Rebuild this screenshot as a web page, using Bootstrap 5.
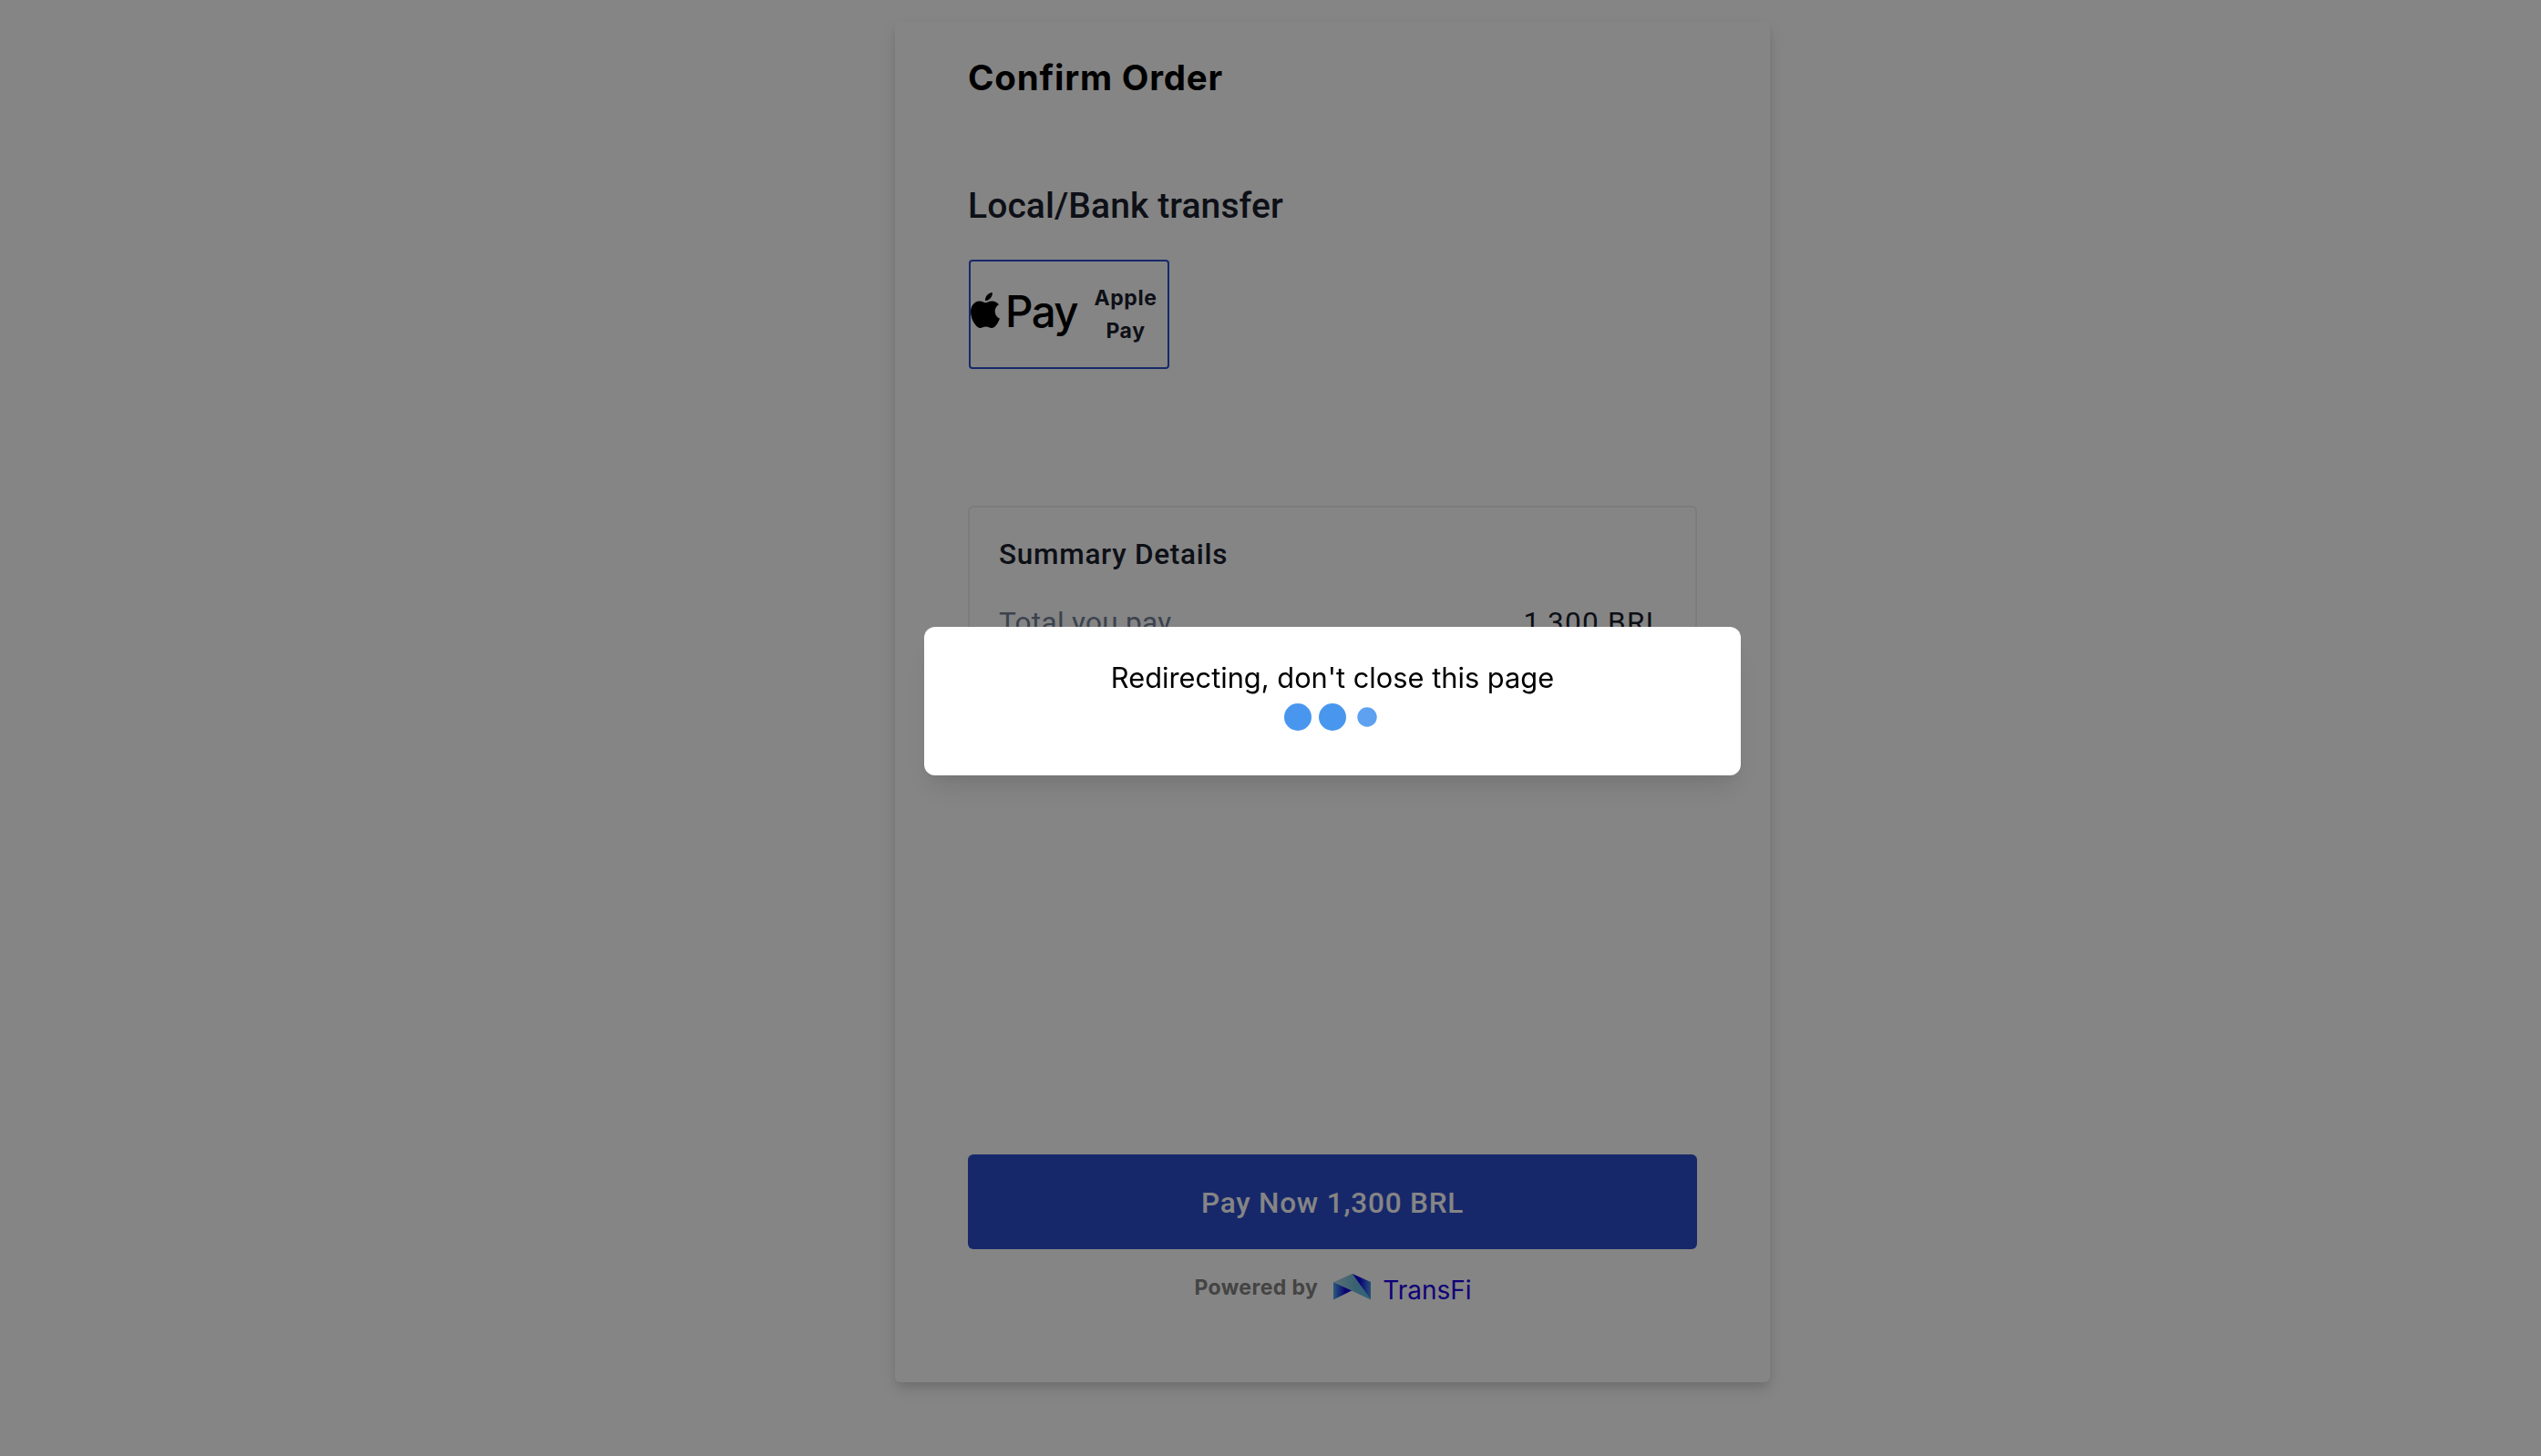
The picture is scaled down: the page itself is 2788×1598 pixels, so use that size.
<!DOCTYPE html>
<html lang="en">

<head>
    <meta charset="UTF-8" />
    <meta name="viewport" content="width=device-width, initial-scale=1" />
    <title>Confirm Order</title>
    <link href="https://cdn.jsdelivr.net/npm/bootstrap@5.3.2/dist/css/bootstrap.min.css" rel="stylesheet" />
    <style>
        :root {
            --brand: #2c4dcc;
            --text-dark: #1a202c;
            --text-muted: #718096;
            --font-display: Inter, "Liberation Sans", sans-serif;
            --font-text: Roboto, "Liberation Sans", sans-serif;
        }

        body {
            background-color: #fff;
            color: var(--text-dark);
            font-family: var(--font-text);
        }

        .page-shell {
            padding-top: 24px;
            padding-left: 136px;
        }

        .order-panel {
            width: 960px;
            height: 1493px;
            padding: 32px 80px 78px;
            background-color: #fff;
            border-radius: 6px;
            box-shadow: 0 8px 16px -1px rgba(0, 0, 0, .15), 0 4px 8px -1px rgba(0, 0, 0, .05);
        }

        .order-title {
            color: #000;
            font: 700 38.5px/58px var(--font-display);
            letter-spacing: .8px;
            margin-bottom: 82px;
        }

        .method-title {
            font-size: 39px;
            font-weight: 500;
            line-height: 60px;
            letter-spacing: .1px;
            margin-bottom: 29px;
        }

        .method-option {
            width: 220px;
            height: 120px;
            margin-left: 1px;
            border: 2px solid var(--brand);
            border-radius: 4px;
            margin-bottom: 150px;
        }

        .apple-mark {
            width: 32px;
            height: 39px;
            margin-bottom: 10px;
        }

        .pay-word {
            color: #000;
            font: 500 47.5px/60px var(--font-display);
            letter-spacing: -1.6px;
            margin-left: 6px;
            margin-bottom: 6px;
        }

        .method-name {
            width: 92px;
            font: 700 23px/36px var(--font-display);
            letter-spacing: .6px;
        }

        .summary-box {
            height: 230px;
            padding: 28px 32px;
            border: 2px solid #edeef0;
            border-radius: 6px;
        }

        .summary-title {
            font-size: 31.5px;
            font-weight: 500;
            line-height: 48px;
            letter-spacing: .73px;
            margin-bottom: 27px;
        }

        .summary-line {
            font-size: 31.5px;
            line-height: 48px;
            letter-spacing: .3px;
        }

        .summary-line .amount {
            letter-spacing: 1.3px;
            padding-right: 4px;
        }

        .btn-pay {
            height: 104px;
            background-color: var(--brand);
            color: #fff;
            border: 0;
            border-radius: 6px;
            font-size: 31.5px;
            font-weight: 500;
            letter-spacing: .8px;
            padding: 3px 0 0;
        }

        .powered-row {
            height: 44px;
            margin-top: 24px;
            padding-left: 1px;
        }

        .powered-label {
            color: #828282;
            font: 700 23px/36px var(--font-display);
            letter-spacing: .4px;
        }

        .transfi-mark {
            width: 41px;
            height: 29px;
            margin: 3px 13px 0 17px;
        }

        .transfi-name {
            color: #1d00e6;
            font: 400 28px/36px var(--font-display);
            margin-top: 3px;
        }

        .modal-backdrop.show {
            opacity: .48;
        }

        .redirect-modal {
            padding-left: 136px;
        }

        .redirect-modal .modal-dialog {
            max-width: 896px;
            margin-top: 688px;
        }

        .redirect-modal .modal-content {
            height: 163px;
            padding-top: 32px;
            border: 0;
            border-radius: 12px;
            box-shadow: 0 20px 30px -6px rgba(0, 0, 0, .1), 0 8px 12px -4px rgba(0, 0, 0, .05);
        }

        .redirect-text {
            color: #000;
            font: 400 30.8px/48px var(--font-display);
        }

        .loader-dots {
            width: 106px;
            height: 30px;
            margin-top: 4px;
        }
    </style>
</head>

<body>

    <div class="page-shell min-vh-100 d-flex justify-content-center align-items-start">
        <main class="order-panel d-flex flex-column">
            <h1 class="order-title">Confirm Order</h1>

            <!-- Payment method -->
            <h2 class="method-title">Local/Bank transfer</h2>
            <div class="method-option d-flex align-items-center">
                <svg class="apple-mark flex-shrink-0" viewBox="2.2 0 19.6 24" preserveAspectRatio="none" aria-hidden="true">
                    <path d="M12.152 6.896c-.948 0-2.415-1.078-3.96-1.04-2.04.027-3.91 1.183-4.961 3.014-2.117 3.675-.546 9.103 1.519 12.09 1.013 1.454 2.208 3.09 3.792 3.039 1.52-.065 2.09-.987 3.935-.987 1.831 0 2.35.987 3.96.948 1.637-.026 2.676-1.48 3.676-2.948 1.156-1.688 1.636-3.325 1.662-3.415-.039-.013-3.182-1.221-3.22-4.857-.026-3.04 2.48-4.494 2.597-4.559-1.429-2.09-3.623-2.324-4.39-2.376-2-.156-3.675 1.09-4.61 1.09zM15.53 3.83c.843-1.012 1.4-2.427 1.245-3.83-1.207.052-2.662.805-3.532 1.818-.78.896-1.454 2.338-1.273 3.714 1.338.104 2.715-.688 3.559-1.701" />
                </svg>
                <span class="pay-word">Pay</span>
                <span class="method-name text-center ms-auto">Apple Pay</span>
            </div>

            <!-- Summary -->
            <section class="summary-box">
                <h3 class="summary-title">Summary Details</h3>
                <div class="summary-line d-flex justify-content-between">
                    <span style="color: var(--text-muted)">Total you pay</span>
                    <span class="amount">1,300 BRL</span>
                </div>
            </section>

            <button type="button" class="btn btn-pay w-100 mt-auto">Pay Now 1,300 BRL</button>

            <div class="powered-row d-flex justify-content-center align-items-start">
                <span class="powered-label">Powered by</span>
                <svg class="transfi-mark" viewBox="0 0 41 29" aria-hidden="true">
                    <defs>
                        <linearGradient id="foldLeft">
                            <stop offset="0" stop-color="#4bb0f0" />
                            <stop offset=".65" stop-color="#1000d8" />
                            <stop offset="1" stop-color="#1400e0" />
                        </linearGradient>
                        <linearGradient id="foldTop">
                            <stop offset="0" stop-color="#b4d4e0" />
                            <stop offset=".6" stop-color="#6cbcd8" />
                            <stop offset="1" stop-color="#58c0ec" />
                        </linearGradient>
                        <linearGradient id="foldRight">
                            <stop offset="0" stop-color="#1400e0" />
                            <stop offset=".4" stop-color="#1208dc" />
                            <stop offset="1" stop-color="#4a9cea" />
                        </linearGradient>
                    </defs>
                    <path d="M0 9v19.5L21 18z" fill="url(#foldLeft)" />
                    <path d="M0 9.2L20.8 0 41 28.5 20 18.5z" fill="url(#foldTop)" />
                    <path d="M20.8 0L41 9v19.5z" fill="url(#foldRight)" />
                </svg>
                <span class="transfi-name">TransFi</span>
            </div>
        </main>
    </div>

    <div class="modal-backdrop show"></div>

    <!-- Redirect notice -->
    <div class="modal redirect-modal show d-block" tabindex="-1" role="dialog" aria-modal="true">
        <div class="modal-dialog">
            <div class="modal-content align-items-center">
                <div class="redirect-text">Redirecting, don't close this page</div>
                <svg class="loader-dots" viewBox="0 0 106 30" aria-hidden="true">
                    <circle cx="15" cy="15" r="15" fill="#4896ee" />
                    <circle cx="53" cy="15" r="15" fill="#4896ee" />
                    <circle cx="91" cy="15" r="10.7" fill="#5da1f0" />
                </svg>
            </div>
        </div>
    </div>

    <script src="https://cdn.jsdelivr.net/npm/bootstrap@5.3.2/dist/js/bootstrap.bundle.min.js"></script>
</body>

</html>
